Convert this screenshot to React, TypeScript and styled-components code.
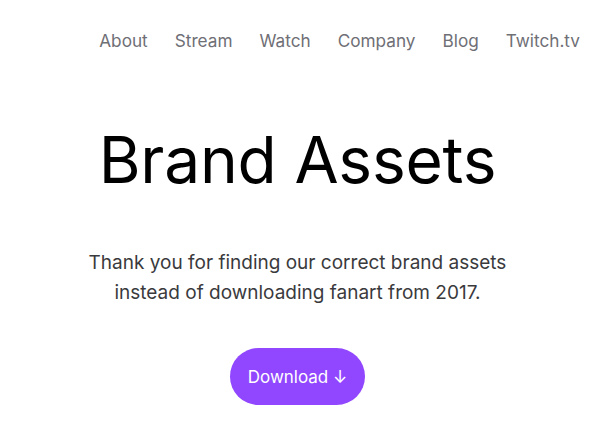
import styled, { createGlobalStyle } from "styled-components"

const GlobalStyle = createGlobalStyle`
  html, body {
    margin: 0;
    padding: 0;
    background: #ffffff;
    font-family: Inter, "Noto Sans", sans-serif;
  }
`

const Page = styled.div`
  width: 595px;
  display: flex;
  flex-direction: column;
  align-items: center;
`

const Nav = styled.nav`
  align-self: stretch;
  display: flex;
  justify-content: flex-end;
  gap: 27px;
  padding: 30px 15px 0 0;
`

const NavLink = styled.a`
  font-size: 17.2px;
  line-height: 22px;
  color: #6f6f76;
  text-decoration: none;
`

const Title = styled.h1`
  margin: 70px 0 0;
  font-size: 64px;
  font-weight: 400;
  line-height: 76px;
  color: #000000;
  letter-spacing: -0.2px;
`

const Lead = styled.p`
  margin: 50px 0 0;
  font-size: 19px;
  line-height: 30px;
  color: #3a3a3d;
  text-align: center;
`

const Button = styled.button`
  margin-top: 40px;
  height: 57px;
  padding: 0 18px;
  border: none;
  border-radius: 29px;
  background: #9147ff;
  color: #ffffff;
  font-family: inherit;
  font-size: 17px;
  cursor: pointer;
`

const links = ["About", "Stream", "Watch", "Company", "Blog", "Twitch.tv"]

export default function App() {
  return (
    <>
      <GlobalStyle />
      <Page>
        <Nav>
          {links.map(l => (
            <NavLink key={l} href="#">
              {l}
            </NavLink>
          ))}
        </Nav>
        <Title>Brand Assets</Title>
        <Lead>
          Thank you for finding our correct brand assets
          <br />
          instead of downloading fanart from 2017.
        </Lead>
        <Button>Download ↓</Button>
      </Page>
    </>
  )
}
